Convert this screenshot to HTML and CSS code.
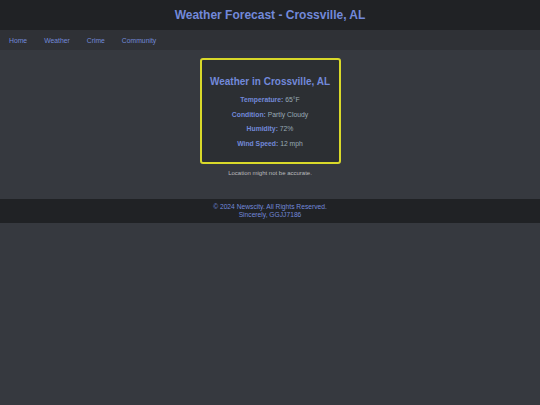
FILE: index.html
```html
<!DOCTYPE html>
<html>
<head>
<meta charset="utf-8">
<link rel="stylesheet" href="styles.css">
</head>
<body>
<header class="site-header">
  <h1 class="site-title">Weather Forecast - Crossville, AL</h1>
</header>
<nav class="site-nav">
  <a href="#">Home</a>
  <a href="#">Weather</a>
  <a href="#">Crime</a>
  <a href="#">Community</a>
</nav>
<main class="content">
  <section class="card">
    <h2 class="card-title">Weather in Crossville, AL</h2>
    <p class="row"><span class="label">Temperature:</span> 65°F</p>
    <p class="row"><span class="label">Condition:</span> Partly Cloudy</p>
    <p class="row"><span class="label">Humidity:</span> 72%</p>
    <p class="row"><span class="label">Wind Speed:</span> 12 mph</p>
  </section>
  <p class="note">Location might not be accurate.</p>
</main>
<footer class="site-footer">
  <p>© 2024 Newscity. All Rights Reserved.</p>
  <p>Sincerely, GGJJ7186</p>
</footer>
</body>
</html>
```
FILE: styles.css
```css
html, body {
  margin: 0;
  padding: 0;
  background: #36393f;
  font-family: "Liberation Sans", Arial, sans-serif;
}
.site-header {
  background: #202225;
  height: 30px;
  display: flex;
  align-items: center;
  justify-content: center;
}
.site-title {
  margin: 0;
  color: #7289da;
  font-size: 12px;
  font-weight: bold;
}
.site-nav {
  background: #2f3136;
  height: 20px;
  display: flex;
  align-items: center;
  gap: 17px;
  padding-left: 9px;
}
.site-nav a {
  color: #7289da;
  text-decoration: none;
  font-size: 6.8px;
}
.content {
  padding: 8px 0 23px;
  display: flex;
  flex-direction: column;
  align-items: center;
}
.card {
  background: #2c2f33;
  border: 2px solid #d9d92a;
  border-radius: 3px;
  width: 137px;
  padding: 16px 0 11px;
  text-align: center;
}
.card-title {
  margin: 0 0 6px;
  color: #7289da;
  font-size: 10px;
  font-weight: bold;
}
.row {
  margin: 0;
  line-height: 14.5px;
  font-size: 6.8px;
  color: #99aab5;
}
.label {
  color: #7289da;
  font-weight: bold;
}
.note {
  margin: 6px 0 0;
  font-size: 6px;
  color: #b9bbbe;
}
.site-footer {
  background: #202225;
  text-align: center;
  padding: 4px 0;
}
.site-footer p {
  margin: 0;
  color: #7289da;
  font-size: 6.7px;
  line-height: 8px;
}
```
